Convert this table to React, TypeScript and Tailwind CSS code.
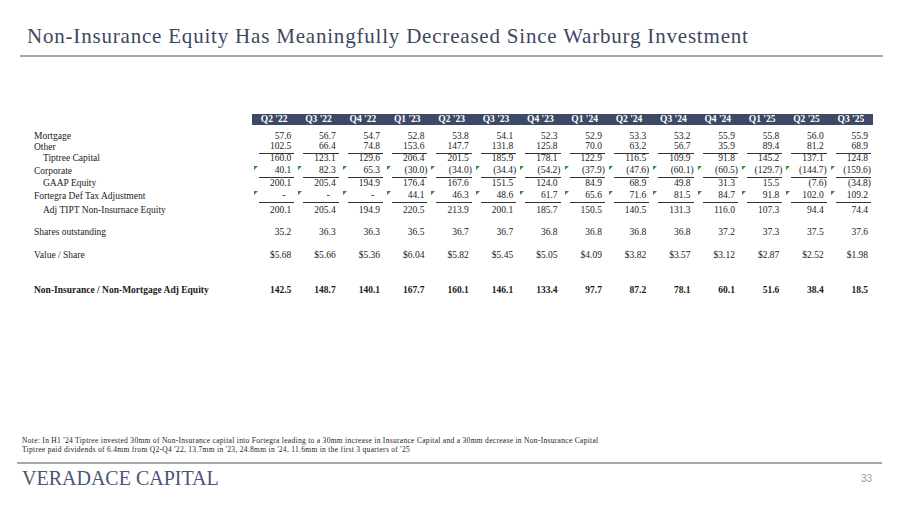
import React from 'react';

const quarters = ["Q2 '22", "Q3 '22", "Q4 '22", "Q1 '23", "Q2 '23", "Q3 '23", "Q4 '23", "Q1 '24", "Q2 '24", "Q3 '24", "Q4 '24", "Q1 '25", "Q2 '25", "Q3 '25"];

type Row = {
  label: string;
  values: string[];
  indent?: boolean;
  line?: boolean;
  mark?: boolean;
  bold?: boolean;
  h: string;
};

const rows: Row[] = [
  { label: 'Mortgage', h: 'mt-[6px] h-[11px]', values: ['57.6', '56.7', '54.7', '52.8', '53.8', '54.1', '52.3', '52.9', '53.3', '53.2', '55.9', '55.8', '56.0', '55.9'] },
  { label: 'Other', h: 'h-[11px]', line: true, values: ['102.5', '66.4', '74.8', '153.6', '147.7', '131.8', '125.8', '70.0', '63.2', '56.7', '35.9', '89.4', '81.2', '68.9'] },
  { label: 'Tiptree Capital', h: 'h-[12px]', indent: true, values: ['160.0', '123.1', '129.6', '206.4', '201.5', '185.9', '178.1', '122.9', '116.5', '109.9', '91.8', '145.2', '137.1', '124.8'] },
  { label: 'Corporate', h: 'h-[13px]', line: true, mark: true, values: ['40.1', '82.3', '65.3', '(30.0)', '(34.0)', '(34.4)', '(54.2)', '(37.9)', '(47.6)', '(60.1)', '(60.5)', '(129.7)', '(144.7)', '(159.6)'] },
  { label: 'GAAP Equity', h: 'h-[12px]', indent: true, values: ['200.1', '205.4', '194.9', '176.4', '167.6', '151.5', '124.0', '84.9', '68.9', '49.8', '31.3', '15.5', '(7.6)', '(34.8)'] },
  { label: 'Fortegra Def Tax Adjustment', h: 'h-[13px]', line: true, mark: true, values: ['-', '-', '-', '44.1', '46.3', '48.6', '61.7', '65.6', '71.6', '81.5', '84.7', '91.8', '102.0', '109.2'] },
  { label: 'Adj TIPT Non-Insurnace Equity', h: 'h-[16px]', indent: true, values: ['200.1', '205.4', '194.9', '220.5', '213.9', '200.1', '185.7', '150.5', '140.5', '131.3', '116.0', '107.3', '94.4', '74.4'] },
  { label: 'Shares outstanding', h: 'mt-[8px] h-[11px]', values: ['35.2', '36.3', '36.3', '36.5', '36.7', '36.7', '36.8', '36.8', '36.8', '36.8', '37.2', '37.3', '37.5', '37.6'] },
  { label: 'Value / Share', h: 'mt-[12px] h-[11px]', values: ['$5.68', '$5.66', '$5.36', '$6.04', '$5.82', '$5.45', '$5.05', '$4.09', '$3.82', '$3.57', '$3.12', '$2.87', '$2.52', '$1.98'] },
  { label: 'Non-Insurance / Non-Mortgage Adj Equity', h: 'mt-[24px] h-[11px]', bold: true, values: ['142.5', '148.7', '140.1', '167.7', '160.1', '146.1', '133.4', '97.7', '87.2', '78.1', '60.1', '51.6', '38.4', '18.5'] },
];

const Cell = ({ v, line, mark }: { v: string; line?: boolean; mark?: boolean }) => {
  const pad = v === '-' ? 'pr-[9px]' : v.endsWith(')') ? '' : 'pr-[3px]';
  return (
    <div className="relative flex h-full pl-[7px] pr-[2px]">
      {mark && (
        <span className="absolute left-[2px] top-[1px] h-0 w-0 border-t-[4px] border-r-[4px] border-t-[#2f8f2f] border-r-transparent" />
      )}
      <div className={`flex w-full items-center justify-end ${line ? 'border-b border-[#333] pb-[1px]' : ''}`}>
        <span className={pad}>{v}</span>
      </div>
    </div>
  );
};

const App = () => {
  return (
    <div className="flex h-[506px] w-[900px] flex-col overflow-hidden bg-white font-['Liberation_Serif',serif]">
      {/* Title */}
      <h1 className="pl-[27px] pt-[24px] text-[21px] leading-[24px] tracking-[0.8px] text-[#3e4760]">
        Non-Insurance Equity Has Meaningfully Decreased Since Warburg Investment
      </h1>
      <div className="ml-[20px] mr-[17px] mt-[7px] h-[2px] bg-[#a6a6a6]" />

      {/* Table */}
      <div className="mt-[57px] pl-[34px] text-[9.5px] text-[#1a1a1a]">
        <div className="grid h-[11px] grid-cols-[218px_repeat(14,44.36px)]">
          <div />
          {quarters.map((q) => (
            <div key={q} className="flex items-center justify-center bg-[#3d4966] text-[9.5px] font-bold leading-none text-white">
              {q}
            </div>
          ))}
        </div>
        {rows.map((r) => (
          <div key={r.label} className={`grid grid-cols-[218px_repeat(14,44.36px)] leading-none ${r.h} ${r.bold ? 'font-bold' : ''}`}>
            <div className={`flex items-center ${r.indent ? 'pl-[9px]' : ''}`}>{r.label}</div>
            {r.values.map((v, i) => (
              <Cell key={i} v={v} line={r.line} mark={r.mark} />
            ))}
          </div>
        ))}
      </div>

      {/* Notes */}
      <div className="mt-auto pl-[22px] text-[7.5px] leading-[9px] tracking-[0.3px] text-[#222]">
        <p>Note: In H1 '24 Tiptree invested 30mm of Non-Insurance capital into Fortegra leading to a 30mm increase in Insurance Capital and a 30mm decrease in Non-Insurance Capital</p>
        <p>Tiptree paid dividends of 6.4mm from Q2-Q4 '22, 13.7mm in '23, 24.8mm in '24, 11.6mm in the first 3 quarters of '25</p>
      </div>
      <div className="ml-[17px] mr-[18px] mt-[8px] h-[2px] bg-[#a6a6a6]" />

      {/* Footer */}
      <div className="mb-[18px] mt-[4px] flex items-center justify-between pl-[22px] pr-[28px]">
        <span className="text-[20px] leading-[20px] text-[#4b5573]">VERADACE CAPITAL</span>
        <span className="font-['Liberation_Sans',sans-serif] text-[10px] text-[#9a9a9a]">33</span>
      </div>
    </div>
  );
};

export default App;
